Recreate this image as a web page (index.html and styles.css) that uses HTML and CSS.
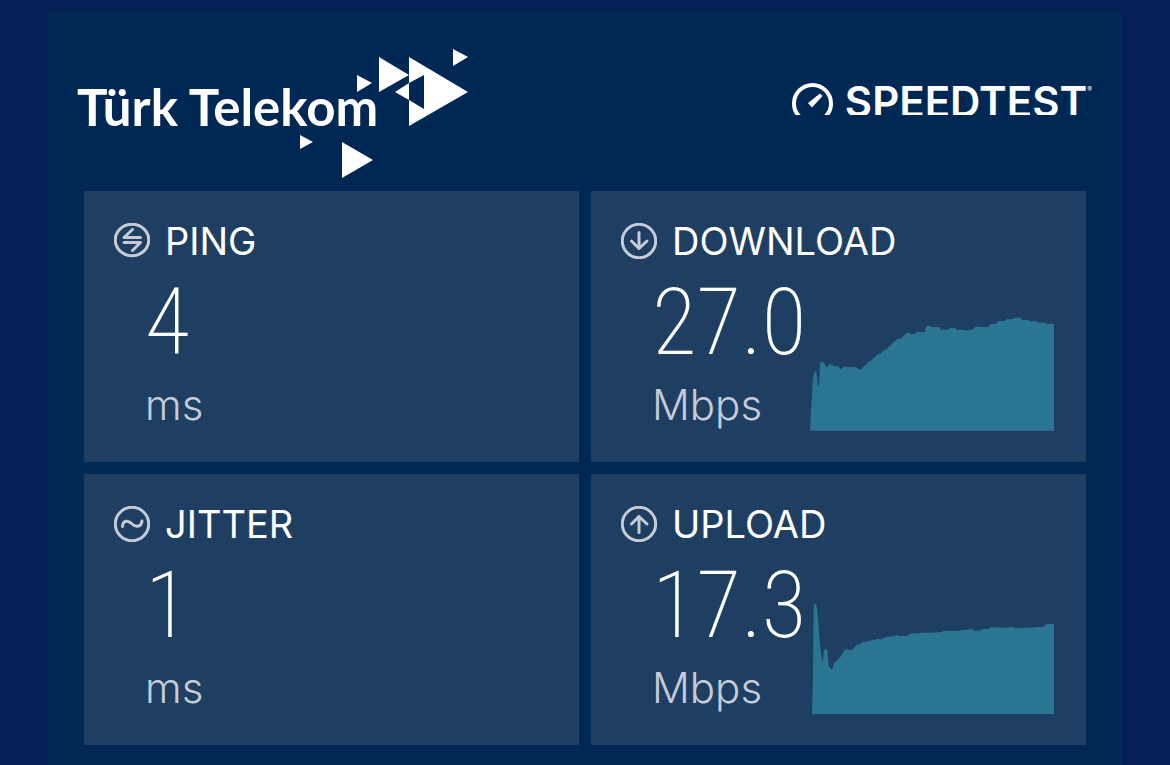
FILE: index.html
```html
<!DOCTYPE html>
<html lang="en">
<head>
    <meta charset="UTF-8">
    <meta name="viewport" content="width=device-width, initial-scale=1.0">
    <title>Speedtest Result</title>
    <link rel="stylesheet" href="styles.css">
</head>
<body>
    <main class="panel">
        <header class="header">
            <svg class="provider" width="392" height="130" viewBox="0 0 392 130" role="img" aria-label="Türk Telekom">
                <text class="provider-name" x="-1" y="78">Türk Telekom</text>
                <path d="M375 1l15 8-15 9zM301 9l30 18-30 17zM279 27l15 8-15 9zM317 44l14-9v17z"/>
                <path d="M331 9l59 35-59 34V52l15 9V27l-15 8z"/>
                <path d="M222 87l13 7-13 7zM264 94l31 18-31 18z"/>
            </svg>
            <div class="brand">
                <svg class="gauge" width="41" height="32" viewBox="0 0 41 32" aria-hidden="true">
                    <circle cx="20.5" cy="20.5" r="18.5"/>
                    <path d="M28 10.500l2.500 2.500L20 24.500 16 20z"/>
                </svg>
                <span class="brand-name">SPEEDTEST</span>
                <sup class="mark">®</sup>
            </div>
        </header>

        <div class="results">
            <section class="card">
                <h2 class="card-title">
                    <svg class="icon" viewBox="0 0 36 36" aria-hidden="true">
                        <ellipse cx="18" cy="17" rx="16.7" ry="15.7"/>
                        <path d="M26.500 14.500H10l8.500-8M10 19.500h16.500l-8 8"/>
                    </svg>
                    PING
                </h2>
                <div class="card-body">
                    <div class="reading">
                        <span class="value">4</span>
                        <span class="unit">ms</span>
                    </div>
                </div>
            </section>

            <section class="card">
                <h2 class="card-title">
                    <svg class="icon" viewBox="0 0 36 36" aria-hidden="true">
                        <circle cx="18" cy="18" r="16.7"/>
                        <path d="M18 9.500v16M10.500 18l7.500 7.500 8-7.500"/>
                    </svg>
                    DOWNLOAD
                </h2>
                <div class="card-body">
                    <div class="reading">
                        <span class="value">27.0</span>
                        <span class="unit">Mbps</span>
                    </div>
                    <svg class="chart" width="244" height="114" viewBox="33 54 732 342" aria-hidden="true">
                        <path d="M33 395L41 250Q43 218 50 216Q53 216 57 260L60 258L63 195Q65 185 69 188L76 193L82 203L89 202L93 193L99 199L106 202H118L124 209H128L136 202L145 204H168L182 212H186L192 204L201 197L210 187H215L228 173L240 164H245L256 152H261L284 130L296 119H304L324 101H330L334 105H347L352 98L376 100L382 82L392 80L398 84H420L426 92H446L453 86H468L472 92H494L500 95L520 92L527 84L541 82L546 84H568L574 75H592L598 66H617L623 61L642 60L647 56H665L670 63H688L692 67H714L719 71H738L743 74H765V395Z"/>
                    </svg>
                </div>
            </section>

            <section class="card">
                <h2 class="card-title">
                    <svg class="icon" viewBox="0 0 36 36" aria-hidden="true">
                        <circle cx="18" cy="18" r="16.7"/>
                        <path d="M8.500 20.500C9 14 14 14 17.500 17.500S27 22 28 15"/>
                    </svg>
                    JITTER
                </h2>
                <div class="card-body">
                    <div class="reading">
                        <span class="value">1</span>
                        <span class="unit">ms</span>
                    </div>
                </div>
            </section>

            <section class="card">
                <h2 class="card-title">
                    <svg class="icon" viewBox="0 0 36 36" aria-hidden="true">
                        <circle cx="18" cy="18" r="16.7"/>
                        <path d="M18 26.500v-16M10.500 18l7.500-7.500 8 7.500"/>
                    </svg>
                    UPLOAD
                </h2>
                <div class="card-body">
                    <div class="reading">
                        <span class="value">17.3</span>
                        <span class="unit">Mbps</span>
                    </div>
                    <svg class="chart" width="244" height="114" viewBox="33 30 732 342" aria-hidden="true">
                        <path d="M39 372L42 250L44 60Q44 36 48 40L53 46Q57 80 61 142Q65 190 71 218L74 188L77 178H84L86 184L89 225L92 234L100 238L105 220L112 214L124 201L134 184L140 177L148 180H159L175 163H183L189 156L200 157L205 153H214L218 149L230 150L234 146L246 148L261 141L285 139L294 134L300 138H323L334 131L352 129L356 131L365 128H395L428 126L434 123L480 122L520 117L525 122H543L548 117H568L574 112H592L617 113L642 111L648 114L690 113L735 110L741 102H765V372Z"/>
                    </svg>
                </div>
            </section>
        </div>
    </main>
</body>
</html>
```

FILE: styles.css
```css
* {
    box-sizing: border-box;
}
body {
    margin: 0;
    padding: 12px 48px 0;
    min-height: 100vh;
    display: flex;
    background-color: #062056;
    color: #fff;
    font-family: Inter, "Open Sans", sans-serif;
}
.panel {
    flex: 1;
    background-color: #002855;
    padding: 36px 36px 20px;
}
.header {
    display: flex;
    justify-content: space-between;
    align-items: flex-start;
    margin: 0 -6px 13px;
}
.provider {
    fill: #fff;
    overflow: visible;
}
.provider-name {
    font-family: Lato, "Open Sans", sans-serif;
    font-size: 51px;
    font-weight: 700;
}
.brand {
    display: flex;
    height: 32px;
    margin-top: 35px;
    overflow: hidden;
}
.gauge {
    fill: #fff;
    margin-right: 12px;
}
.gauge circle {
    fill: none;
    stroke: #fff;
    stroke-width: 4;
}
.brand-name {
    font-size: 42px;
    font-weight: 600;
    line-height: 38px;
}
.mark {
    font-size: 7px;
    line-height: 14px;
}
.results {
    display: grid;
    grid-template-columns: repeat(2, minmax(0, 1fr));
    gap: 12px;
}
.card {
    min-height: 271px;
    padding: 32px 32px 30px 30px;
    background-color: #1f3f62;
}
.card-title {
    display: flex;
    align-items: center;
    gap: 15px;
    margin: 0;
    font-size: 38px;
    font-weight: 400;
    line-height: 36px;
}
.icon {
    width: 36px;
    height: 36px;
    fill: none;
    stroke: #c5ccd7;
    stroke-width: 3;
    stroke-linecap: round;
    stroke-linejoin: round;
}
.card-body {
    display: flex;
    justify-content: space-between;
    align-items: flex-end;
    padding-left: 31px;
}
.reading {
    display: flex;
    flex-direction: column;
    padding-bottom: 8px;
}
.value {
    font-family: "Roboto Condensed", Roboto, sans-serif;
    font-size: 92px;
    font-weight: 200;
    line-height: 128px;
}
.unit {
    font-size: 42px;
    font-weight: 300;
    line-height: 36px;
    color: #c5ccd7;
}
.chart {
    flex: none;
    fill: #2a7592;
}
```
